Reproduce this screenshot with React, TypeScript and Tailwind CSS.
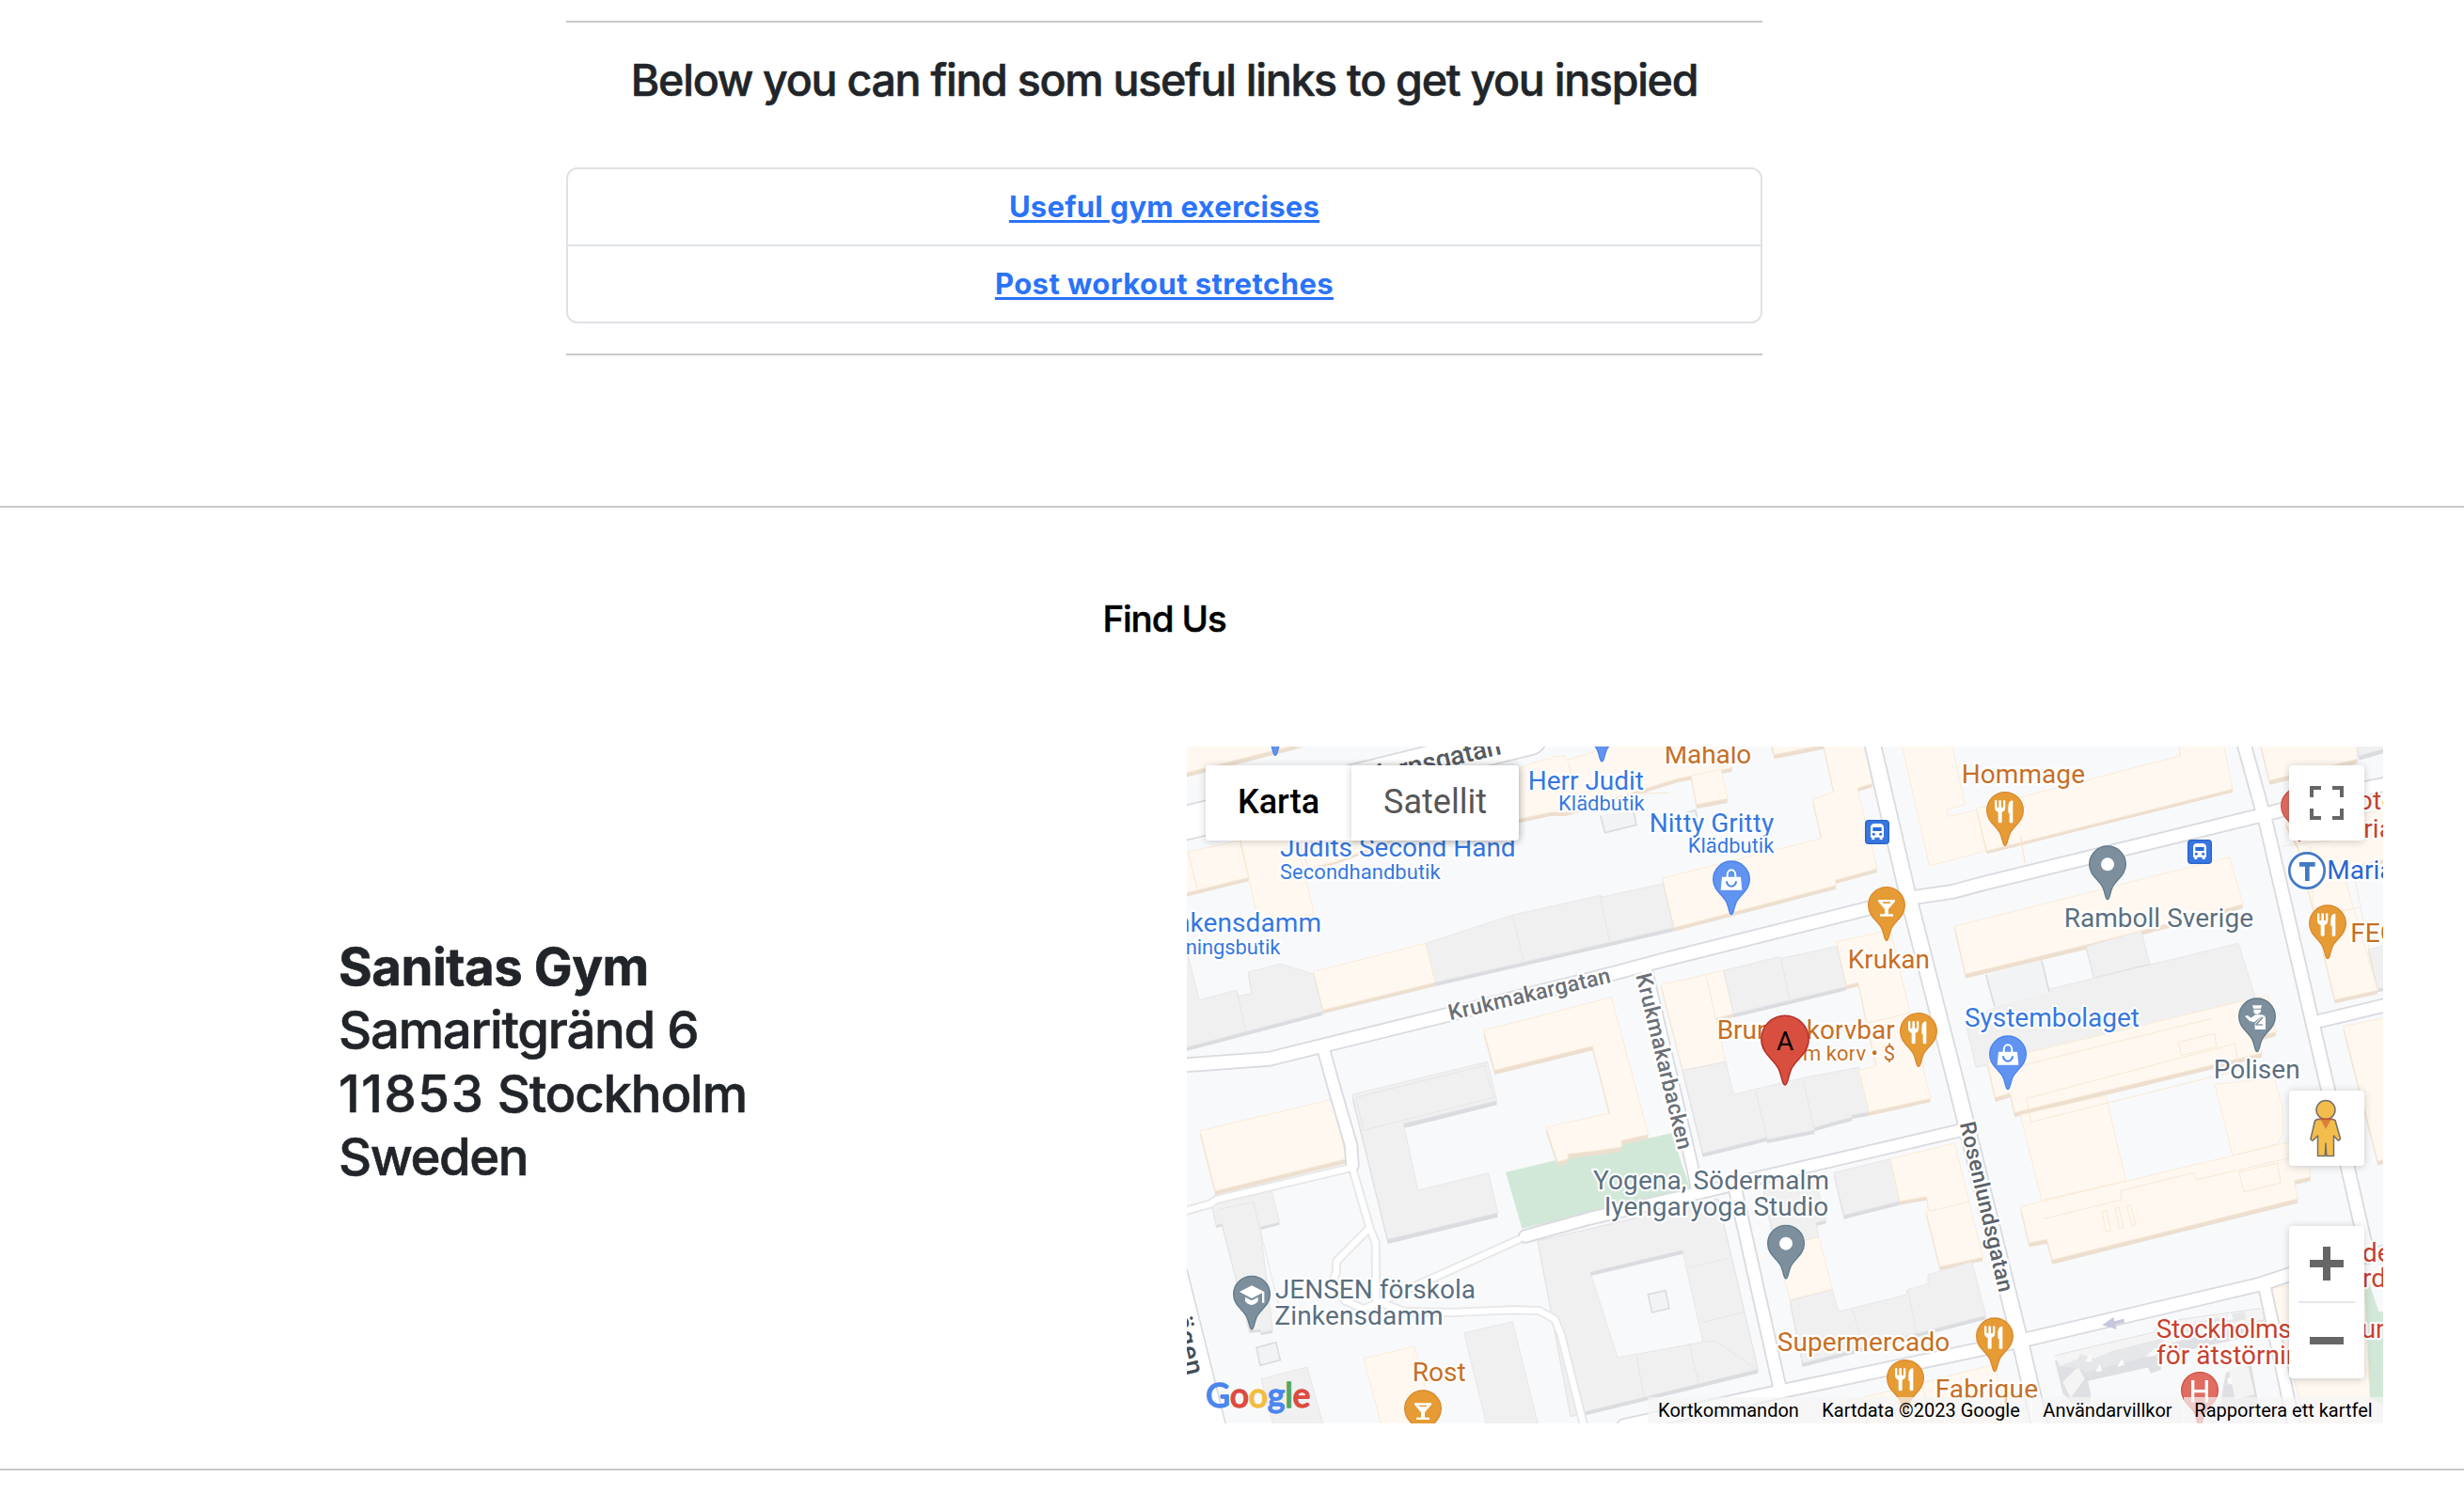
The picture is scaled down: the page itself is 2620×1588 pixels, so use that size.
import type { ReactNode } from "react";

/* Map geometry is kept in a 3816 x 2160 unit space whose origin is (6, 12). */

type Tone = "shop" | "plain";
type Building = { p: string; t: Tone; d?: number };

const BUILDINGS: Building[] = [
  { t: "shop", d: 14, p: "0,0 380,0 0,97" },
  { t: "shop", d: 0, p: "175,300 350,290 412,548 232,560" },
  { t: "shop", d: 12, p: "0,350 175,312 203,430 0,480" },
  { t: "shop", d: 8, p: "360,300 690,300 480,380 395,400" },
  { t: "shop", d: 12, p: "1060,85 1110,64 1170,50 1172,44 1212,42 1216,56 1400,0 1740,0 1745,80 1570,115 1440,155 1215,222 1165,222 1060,245" },
  { t: "shop", d: 14, p: "1615,105 1710,85 1731,178 1632,197" },
  { t: "shop", d: 14, p: "1870,0 2070,0 1880,38" },
  { t: "shop", d: 12, p: "2035,0 2168,0 2193,130 2145,145 2208,402 2075,438 2077,455 1560,590 1523,432 2030,305 2003,180 2070,157" },
  { t: "plain", d: 12, p: "768,640 1045,550 1325,487 1330,492 1525,450 1558,590 1290,652 798,765" },
  { t: "shop", d: 12, p: "410,730 768,640 798,765 440,853" },
  { t: "plain", d: 12, p: "0,670 10,680 45,820 165,790 170,808 213,800 202,732 305,706 410,738 440,857 195,922 0,973" },
  { t: "shop", d: 14, p: "953,918 1360,812 1478,1250 1392,1270 1392,1290 1312,1302 1222,1312 1222,1328 1188,1337 1152,1227 1355,1182 1300,968 988,1045" },
  { t: "plain", d: 14, p: "533,1122 965,1018 995,1142 697,1216 743,1428 968,1373 998,1500 647,1585" },
  { t: "shop", d: 14, p: "48,1238 470,1138 515,1328 97,1430" },
  { t: "plain", d: 8, p: "85,1472 275,1425 302,1530 240,1546 280,1875 244,1882 240,1872 205,1875 118,1535 100,1540" },
  { t: "plain", p: "243,2030 390,1992 445,2190 285,2190" },
  { t: "shop", p: "570,1965 732,1926 800,2190 630,2190" },
  { t: "plain", p: "890,1883 1045,1847 1130,2190 965,2190" },
  { t: "shop", d: 10, p: "1518,772 1718,727 1750,865 1693,880 1725,1018 1588,1045" },
  { t: "plain", d: 12, p: "1718,727 1895,683 1902,688 2078,650 2110,778 1930,822 1750,865" },
  { t: "plain", d: 12, p: "1588,1045 1725,1018 1750,1122 1970,1070 2150,1035 2182,1178 2128,1188 2128,1195 2070,1210 2008,1228 2008,1236 1858,1266 1855,1260 1652,1310" },
  { t: "shop", d: 12, p: "2078,635 2250,598 2378,1135 2182,1178 2150,1045 2205,1030 2175,895 2148,765 2110,775" },
  { t: "plain", d: 12, p: "2070,1372 2250,1328 2280,1463 2102,1508" },
  { t: "shop", d: 12, p: "2250,1328 2455,1278 2545,1642 2408,1672 2365,1500 2372,1492 2366,1448 2280,1463" },
  { t: "plain", d: 10, p: "1845,1430 2010,1390 2045,1524 2013,1532 2022,1578 1885,1610" },
  { t: "shop", p: "1885,1610 2022,1578 2065,1743 1930,1778" },
  { t: "plain", d: 12, p: "1930,1780 2065,1746 2085,1815 2300,1762 2305,1745 2370,1727 2370,1697 2510,1656 2555,1828 1970,1980" },
  { t: "shop", p: "2100,2105 2580,1985 2640,2190 2100,2190" },
  { t: "shop", p: "2285,0 2445,0 2488,198 2430,213 2435,235 2525,215 2555,345 2375,393" },
  { t: "shop", d: 10, p: "2525,210 3175,42 3170,0 3312,0 3342,148 2558,345" },
  { t: "shop", d: 14, p: "3430,0 3738,0 3740,52 3460,120" },
  { t: "plain", d: 14, p: "3735,0 3840,0 3840,15 3745,42" },
  { t: "shop", d: 12, p: "3510,255 3840,215 3840,370 3690,400 3805,790 3668,820 3550,330" },
  { t: "plain", d: 10, p: "3775,660 3840,645 3840,778 3805,786" },
  { t: "shop", d: 14, p: "3695,905 3840,875 3840,1325 3805,1335" },
  { t: "plain", d: 10, p: "2875,650 3050,600 3077,705 2900,750" },
  { t: "plain", d: 0, p: "3360,640 3420,830 2700,1010 2523,1035 2488,885 2700,800" },
  { t: "shop", d: 14, p: "2455,585 3332,365 3375,515 3050,600 2875,645 2490,738" },
  { t: "shop", d: 14, p: "2560,1020 3455,805 3480,922 3425,938 3435,990 2647,1180 2632,1118 2585,1132" },
  { t: "shop", p: "2665,1187 2937,1125 3002,1398 2733,1460" },
  { t: "shop", p: "3285,1090 3475,1070 3500,1160 3503,1245 3485,1280 3342,1317" },
  { t: "shop", d: 14, p: "2665,1480 3520,1275 3580,1260 3590,1385 3538,1397 3550,1455 2767,1650 2750,1585 2693,1595" },
  { t: "shop", p: "3465,1742 3760,1690 3785,2190 3580,2190" },
];

/* Inner seams between adjoining blocks. */
const PLAIN_SEAMS =
  "M1045,550L1080,695M1325,490L1355,637M168,800L197,935M1902,690L1930,828" +
  "M545,1132L955,1030L985,1132L570,1237ZM105,1490L218,1465L300,1800" +
  "M1820,1110L1860,1275M1973,1080L2008,1235M2130,1808L2152,1890M2305,1745L2335,1885";
const SHOP_SEAMS =
  "M1662,740L1693,880M2375,1495L2500,1465M2665,295L2680,385L2665,295M2175,895L2310,862M1545,160L1455,162L1440,155" +
  "M2683,1135L3350,960L3362,1045L2700,1210ZM3170,955L3285,928L3290,970L3178,998ZM2590,1050L3275,880" +
  "M2737,1520L2988,1458L2985,1430L3218,1372L3225,1395L3525,1325M3362,1370L3485,1342L3495,1405L3378,1433Z" +
  "M2925,1495L2940,1492L2953,1558L2938,1560ZM2967,1486L2980,1483L2993,1548L2980,1550ZM3005,1478L3017,1476L3033,1538L3020,1541Z" +
  "M2355,2060L2385,2190M3500,330L3840,290M3590,560L3745,525M3600,560L3590,330M3725,400L3790,720M1223,60L1240,140M10,350L40,468M175,315L203,430";

const ROADS: { p: string; w: number }[] = [
  { w: 50, p: "-20,1030 267,1009 835,869 1370,735 1538,690 2175,530 2335,492 2450,475 2550,448 3430,232 3790,140 3900,118" },
  { w: 58, p: "2190,-10 2302,470 2458,1080 2515,1310 2657,1883 2671,1940 2730,2190" },
  { w: 50, p: "3374,-10 3435,210 3447,250 3640,1080 3708,1350 3765,1600 3775,1640" },
  { w: 48, p: "3622,887 3860,830" },
  { w: 50, p: "1400,2180 1900,2070 2685,1904 3430,1728 3560,1685 3900,1610" },
  { w: 46, p: "3445,1740 3540,2190" },
  { w: 46, p: "1085,1575 1290,1518 1730,1415 1800,1395 2490,1233" },
  { w: 44, p: "1468,710 1555,1080 1620,1360 1633,1425" },
  { w: 48, p: "1752,1410 1900,2070" },
  { w: 46, p: "444,985 470,1080 530,1285 534,1350" },
  { w: 114, p: "-60,270 6,255 750,71 1100,-15" },
];

const PATHS = [
  "-10,1497 80,1472 100,1458 525,1357",
  "535,1360 590,1550 608,1595 610,1790",
  "585,1552 483,1655 483,1690 470,1720 510,1780 570,1807 620,1785 1065,1585",
  "620,1785 700,1815 850,1818 1040,1810 1130,1812 1180,1840 1200,1890 1275,2190",
];

const BLUE = "#3577e0";
const ORANGE = "#c66f25";
const SLATE = "#5b6f7f";
const RED = "#c8422f";

type Label = { s: string; x: number; y: number; c: string; l?: number; f?: number };
const LABELS: Label[] = [
  { s: "Mahalo", x: 1529, y: 65, c: ORANGE, l: 278 },
  { s: "Herr Judit", x: 1094, y: 149, c: BLUE, l: 370 },
  { s: "Klädbutik", x: 1191, y: 217, c: BLUE, l: 275, f: 66 },
  { s: "Judits Second Hand", x: 303, y: 364, c: BLUE, l: 752 },
  { s: "Secondhandbutik", x: 303, y: 434, c: BLUE, l: 512, f: 66 },
  { s: "Zinkensdamm", x: -101, y: 604, c: BLUE, l: 536 },
  { s: "ningsbutik", x: 2, y: 674, c: BLUE, l: 302, f: 66 },
  { s: "Nitty Gritty", x: 1481, y: 284, c: BLUE, l: 398 },
  { s: "Klädbutik", x: 1604, y: 352, c: BLUE, l: 275, f: 66 },
  { s: "Krukan", x: 2114, y: 721, c: ORANGE, l: 262 },
  { s: "Brunos korvbar", x: 1697, y: 946, c: ORANGE, l: 567 },
  { s: "m korv • $", x: 1971, y: 1015, c: ORANGE, l: 294, f: 66 },
  { s: "Hommage", x: 2477, y: 130, c: ORANGE, l: 394 },
  { s: "Ramboll Sverige", x: 2804, y: 589, c: SLATE, l: 604 },
  { s: "Mariatorget", x: 3643, y: 435, c: "#2a66cf" },
  { s: "FEG", x: 3718, y: 635, c: ORANGE },
  { s: "otel", x: 3740, y: 213, c: RED, l: 144 },
  { s: "ria", x: 3760, y: 302, c: RED },
  { s: "Systembolaget", x: 2487, y: 907, c: BLUE, l: 558 },
  { s: "Polisen", x: 3281, y: 1072, c: SLATE, l: 276 },
  { s: "Yogena, Södermalm", x: 1302, y: 1426, c: SLATE, l: 753 },
  { s: "Iyengaryoga Studio", x: 1337, y: 1510, c: SLATE, l: 716 },
  { s: "JENSEN förskola", x: 287, y: 1773, c: SLATE, l: 640 },
  { s: "Zinkensdamm", x: 286, y: 1858, c: SLATE, l: 538 },
  { s: "Rost", x: 725, y: 2038, c: ORANGE, l: 171 },
  { s: "Supermercado", x: 1889, y: 1942, c: ORANGE, l: 551 },
  { s: "Fabrique", x: 2393, y: 2092, c: ORANGE, l: 328 },
  { s: "Stockholms", x: 3098, y: 1898, c: RED, l: 432 },
  { s: "un", x: 3752, y: 1898, c: RED },
  { s: "för ätstörnin", x: 3099, y: 1982, c: RED, l: 460 },
  { s: "der", x: 3756, y: 1655, c: RED },
  { s: "rd", x: 3756, y: 1738, c: RED },
];

const STREETS = [
  { s: "Krukmakargatan", x: 846, y: 886, a: -13.3, l: 529, f: 70, c: "#6b7078", w: 14 },
  { s: "Hornsgatan", x: 586, y: 136, a: -13.2, l: 438, f: 84, c: "#565b62", w: 0 },
  { s: "Krukmakarbacken", x: 1438, y: 742, a: 76.4, l: 576, f: 70, c: "#6b7078", w: 14 },
  { s: "Rosenlundsgatan", x: 2471, y: 1215, a: 76.9, l: 556, f: 70, c: "#5c6269", w: 14 },
  { s: "Ringvägen", x: -87, y: 1620, a: 77, l: 412, f: 84, c: "#454d56", w: 0 },
];

type Glyph = "fork" | "bag" | "bar" | "dot" | "cap" | "police" | "hospital" | "none";
type Pin = { x: number; y: number; fill: string; edge: string; g: Glyph };
const FOOD = { fill: "#e69b35", edge: "#d98a2e" };
const STORE = { fill: "#6193f0", edge: "#4a84ea" };
const PLACE = { fill: "#7d8f9d", edge: "#617b8a" };
const CARE = { fill: "#e06c62", edge: "#d24f43" };
const PINS: Pin[] = [
  { x: 288, y: -72, g: "none", ...STORE },
  { x: 1330, y: -52, g: "none", ...STORE },
  { x: 1743, y: 436, g: "bag", ...STORE },
  { x: 2238, y: 519, g: "bar", ...FOOD },
  { x: 2340, y: 921, g: "fork", ...FOOD },
  { x: 2616, y: 216, g: "fork", ...FOOD },
  { x: 2943, y: 388, g: "dot", ...PLACE },
  { x: 3645, y: 577, g: "fork", ...FOOD },
  { x: 2625, y: 994, g: "bag", ...STORE },
  { x: 3420, y: 874, g: "police", ...PLACE },
  { x: 1917, y: 1598, g: "dot", ...PLACE },
  { x: 213, y: 1760, g: "cap", ...PLACE },
  { x: 759, y: 2125, g: "bar", ...FOOD },
  { x: 2298, y: 2028, g: "fork", ...FOOD },
  { x: 2583, y: 1894, g: "fork", ...FOOD },
  { x: 3237, y: 2067, g: "hospital", ...CARE },
  { x: 3555, y: 202, g: "hospital", ...CARE },
];

const TEARDROP = "M0,112C-7,112 -6,96 -15,74C-27,48 -58,36 -58,0A58,58 0 1 1 58,0C58,36 27,48 15,74C6,96 7,112 0,112Z";

function PinGlyph({ g }: { g: Glyph }) {
  switch (g) {
    case "fork":
      return (
        <path
          fill="#fff"
          d="M-33,-30V-10Q-33,2 -22,5V36Q-22,40 -18,40H-14Q-10,40 -10,36V5Q1,2 1,-10V-30Q1,-33 -3,-33Q-6,-33 -6,-30V-10H-12V-30Q-12,-33 -16,-33Q-20,-33 -20,-30V-10H-26V-30Q-26,-33 -29,-33Q-33,-33 -33,-30ZM10,8V-10Q10,-32 25,-32V37Q25,40 22,40H17Q14,40 14,37V8Z"
        />
      );
    case "bag":
      return (
        <g fill="none" stroke="#fff">
          <path fill="#fff" stroke="none" d="M-30,-8H30L34,34H-34Z" />
          <path strokeWidth="6" d="M-13,-6V-14A13,16 0 0 1 13,-14V-6" />
          <path stroke="#4a84ea" strokeWidth="6" d="M-15,6A15,16 0 0 0 15,6" />
        </g>
      );
    case "bar":
      return <path fill="#fff" fillRule="evenodd" d="M-27,-18H27V-13L6,12V28H21V35H-21V28H-6V12L-27,-13ZM-14,-11L-10,-6H10L14,-11Z" />;
    case "dot":
      return <circle r="21" fill="#fff" />;
    case "cap":
      return <path fill="#fff" d="M0,-28L40,-8V27H33V-4L0,13L-39,-8ZM-21,9L0,20L20,9V22Q12,33 0,34Q-14,33 -21,22Z" />;
    case "police":
      return (
        <g fill="#fff">
          <path d="M-15,-36H15L12,-26H-12ZM-11,-23H12V-16Q8,-8 0,-8Q-9,-8 -11,-16ZM-5,-6H14Q27,-4 27,6V41H-7V22L17,-4L-9,18L-24,14L-39,-2L-30,-4L-20,4Z" />
          <path d="M-4,26L18,2" stroke="#7d8f9d" strokeWidth="5" />
          <path d="M-4,26H18" stroke="#7d8f9d" strokeWidth="4" />
        </g>
      );
    case "hospital":
      return <path fill="none" stroke="#fff" strokeWidth="10" d="M-22,-33V38M22,-33V38M-22,2H22" />;
    default:
      return null;
  }
}

function BusStop({ x, y }: { x: number; y: number }) {
  return (
    <g transform={`translate(${x} ${y})`}>
      <rect x="-37" y="-37" width="74" height="74" rx="10" fill="#3876e2" stroke="#2b62c6" strokeWidth="4" />
      <path fill="#fff" d="M-21,-16Q-20,-26 -8,-27H8Q20,-26 21,-16V17H17V24H8V17H-8V24H-17V17H-21Z" />
      <path fill="#2f6bd6" d="M-14,-15H14V-3H-14Z" />
      <circle cx="-11" cy="7" r="4.5" fill="#2f6bd6" />
      <circle cx="11" cy="7" r="4.5" fill="#2f6bd6" />
    </g>
  );
}

function Hospital() {
  return (
    <g>
      <g fill="#dfe0e3">
        <path d="M2775,1972L2800,2075L2830,2110H2885L2890,2080L2880,2035L3080,1990L3100,1960L3420,1890L3445,1850L3430,1805Z" />
        <path d="M3320,2010L3400,1985L3425,2120L3300,2130Z" />
        <path d="M3065,1975L3105,1960L3115,2000L3080,2012Z" />
      </g>
      <g fill="#f4f4f4">
        <path d="M2775,1955L3095,1880L3105,1850L3430,1805L3440,1840L3110,1925L2870,1985L2790,1990Z" />
        <path d="M2800,2040L2850,1990L2870,2030L2825,2090Z" />
        <path d="M3330,2000L3390,1985L3412,2080L3350,2095Z" />
      </g>
      <g fill="#e6e7e9">
        <path d="M2790,1990L2850,1965L2855,1950L2900,1965L2960,1940L3060,1915L3120,1900V1925L2880,2000Z" />
        <path d="M3150,1870L3250,1845L3380,1815L3385,1840L3160,1890Z" />
        <path d="M2860,1990L3080,1930L3085,1955L2870,2010Z" />
      </g>
      <g fill="#fafafa">
        <path d="M2870,1975L2890,1950L2893,1975ZM2905,2008L2918,1982L2926,2005ZM2972,1992L2990,1965L2997,1985ZM3065,1960L3095,1930L3098,1955ZM3320,1843L3335,1818L3345,1840ZM3325,2030L3340,2020V2045L3327,2048Z" />
      </g>
      <path fill="none" stroke="#d6d7da" strokeWidth="2" d="M2775,1955L3095,1880L3105,1850L3430,1805M2880,2035L3080,1990M3400,1985L3425,2120" />
    </g>
  );
}

function MapArt() {
  return (
    <svg className="block h-full w-full" viewBox="6 12 3816 2160" role="img" aria-label="Karta">
      <rect x="0" y="0" width="3840" height="2190" fill="#f8f9fb" />
      <path fill="#d1e8d8" d="M1023,1370L1552,1245L1612,1425L1290,1500L1075,1550ZM3750,1670L3780,1730L3808,1815H3840V2120L3775,2090Z" />

      {BUILDINGS.filter((b) => b.d).map((b) => (
        <g key={b.p} fill={b.t === "shop" ? "#ecdfd0" : "#dadce0"}>
          <polygon points={b.p} transform={`translate(0 ${b.d})`} />
          <polygon points={b.p} transform={`translate(0 ${(b.d ?? 0) / 2})`} />
        </g>
      ))}
      {BUILDINGS.map((b) => (
        <polygon
          key={b.p}
          points={b.p}
          fill={b.t === "shop" ? "#fef8f1" : "#f0f0f0"}
          stroke={b.t === "shop" ? "#fbe8d2" : "#e4e5e7"}
          strokeWidth="2.5"
        />
      ))}

      <path fill="#f0f0f0" stroke="#e0e1e3" strokeWidth="3" d="M1125,1590L1700,1455L1828,2000L1290,2135L1230,2150Z" />
      <path fill="none" stroke="#dadce0" strokeWidth="12" d="M1828,2006L1290,2137L1270,2142" />
      <path fill="#f8f9fb" stroke="#e0e1e3" strokeWidth="2" d="M1295,1695L1588,1625L1652,1912L1380,1962Z" />
      <path fill="none" stroke="#dadce0" strokeWidth="12" d="M1294,1695L1588,1625" />
      <path fill="none" stroke="#e2e3e5" strokeWidth="2.5" d="M1605,1675L1735,1645M1648,1850L1780,1818M1440,1952L1465,2090M1608,1915L1640,2050M1652,1912L1690,1908L1828,2002" />
      <path fill="none" stroke="#e2e3e5" strokeWidth="2.5" d={PLAIN_SEAMS} />
      <path fill="none" stroke="#f8e4cd" strokeWidth="2.5" d={SHOP_SEAMS} />
      <g fill="#f1f3f4" stroke="#dadce0" strokeWidth="5">
        <path d="M1477,1760L1533,1748L1545,1805L1490,1818Z" />
        <path d="M228,1930L290,1913L304,1970L240,1987Z" />
        <path d="M1325,232L1340,287L1440,262L1430,215" />
        <path d="M1595,225L1628,215L1634,240" />
        <path stroke="none" d="M2555,740L2733,695L2757,795L2585,842Z" />
        <path fill="none" d="M2555,740L2583,842M2733,695L2757,795" />
      </g>
      <Hospital />

      <g fill="none" strokeLinejoin="round" strokeLinecap="round">
        {PATHS.map((p) => (
          <polyline key={p} points={p} stroke="#e6e7e8" strokeWidth="30" />
        ))}
        {ROADS.map((r) => (
          <polyline key={r.p} points={r.p} stroke="#dadbe0" strokeWidth={r.w} />
        ))}
        {PATHS.map((p) => (
          <polyline key={p} points={p} stroke="#fff" strokeWidth="19" />
        ))}
        {ROADS.map((r) => (
          <polyline key={r.p} points={r.p} stroke="#fff" strokeWidth={r.w - 11} />
        ))}
        <path fill="#fff" stroke="#dadbe0" strokeWidth="5" d="M6,1680L134,2190H-20V1640Z" />
      </g>
      <path fill="#c5c8db" d="M2926,1858L2962,1833L2965,1846L2995,1838L2997,1850L2968,1857L2972,1872Z" />

      <g fontFamily="Roboto, 'Liberation Sans', sans-serif" strokeLinejoin="round">
        {STREETS.map((t) => (
          <text
            key={t.s}
            transform={`translate(${t.x} ${t.y}) rotate(${t.a})`}
            fontSize={t.f}
            fontWeight="500"
            fill={t.c}
            stroke="#fff"
            strokeWidth={t.w}
            paintOrder="stroke"
            textLength={t.l}
          >
            {t.s}
          </text>
        ))}
        <BusStop x={2208} y={285} />
        <BusStop x={3237} y={348} />
        <circle cx="3579" cy="408" r="56" fill="#fff" stroke="#4179c4" strokeWidth="8" />
        <path fill="none" stroke="#4179c4" strokeWidth="14" d="M3555,388H3605M3580,388V441" />
        {PINS.map((p) => (
          <g key={`${p.x}-${p.y}`} transform={`translate(${p.x} ${p.y})`}>
            <path d={TEARDROP} fill={p.fill} stroke={p.edge} strokeWidth="4" />
            <PinGlyph g={p.g} />
          </g>
        ))}
        {LABELS.map((t) => (
          <text
            key={`${t.s}-${t.y}`}
            x={t.x}
            y={t.y}
            fontSize={t.f ?? 84}
            fill={t.c}
            stroke="#fff"
            strokeWidth="13"
            paintOrder="stroke"
            textLength={t.l}
          >
            {t.s}
          </text>
        ))}
        <g transform="translate(1914 946)">
          <path d={TEARDROP} transform="scale(1.3)" fill="#d84f3f" stroke="#b3312a" strokeWidth="3.5" />
          <text y="34" textAnchor="middle" fontSize="84" fill="#000">
            A
          </text>
        </g>
      </g>
      <text
        x="66"
        y="2121"
        fontFamily="Lato, 'Open Sans', sans-serif"
        fontSize="107"
        fontWeight="500"
        textLength="334"
        strokeWidth="4"
        strokeLinejoin="round"
      >
        <tspan fill="#4a86ee" stroke="#4a86ee">G</tspan>
        <tspan fill="#dd4b3e" stroke="#dd4b3e">o</tspan>
        <tspan fill="#f2bc3f" stroke="#f2bc3f">o</tspan>
        <tspan fill="#4a86ee" stroke="#4a86ee">g</tspan>
        <tspan fill="#55a65a" stroke="#55a65a">l</tspan>
        <tspan fill="#dd4b3e" stroke="#dd4b3e">e</tspan>
      </text>
    </svg>
  );
}

const CARD = "flex h-20 w-20 items-center justify-center rounded-[4px] bg-white shadow-[0_1px_8px_rgba(0,0,0,0.2)]";

function MapControls() {
  return (
    <>
      <div className="absolute left-5 top-5 flex h-20 rounded-[4px] text-[36px] shadow-[0_1px_8px_rgba(0,0,0,0.2)]">
        <button className="w-[155px] rounded-l-[4px] bg-white pb-0.5 font-medium text-black">Karta</button>
        <button className="w-[178px] rounded-r-[4px] bg-white pb-0.5 text-[#565656] shadow-[0_1px_8px_rgba(0,0,0,0.2)]">Satellit</button>
      </div>
      <div className="absolute right-5 top-5">
        <button className={CARD} aria-label="Helskärm">
          <svg className="h-9 w-9" viewBox="0 0 18 18" fill="#666">
            <path d="M0 0v6h2V2h4V0H0zM16 0h-4v2h4v4h2V0h-2zM16 16h-4v2h6v-6h-2v4zM2 12H0v6h6v-2H2v-4z" />
          </svg>
        </button>
      </div>
      <div className="absolute right-5 top-[366px] flex flex-col gap-16">
        <button className={CARD} aria-label="Street View">
          <svg className="-ml-0.5 h-[62px] w-9" viewBox="0 0 36 62">
            <g fill="#f4bd4b" stroke="#73706a" strokeWidth="1.5" strokeLinejoin="round">
              <path d="M9 21.500H25L28 22.500L33.500 42Q33 44 31 44L26.500 39V60.500H18.800L18 47L17.200 60.500H9.500V39L4.500 44Q2 44 2 42L6.500 23Z" />
              <circle cx="18" cy="11.500" r="10" />
            </g>
            <path d="M12 21H24L18 32Z" fill="#d8803c" />
            <path d="M10.500 21.300H25.500" stroke="#c9532f" strokeWidth="1.500" />
          </svg>
        </button>
        <div className="flex h-[162px] w-20 flex-col items-center rounded-[4px] bg-white shadow-[0_1px_8px_rgba(0,0,0,0.2)]">
          <button className="flex h-20 w-20 items-center justify-center" aria-label="Zooma in">
            <svg className="h-9 w-9" viewBox="0 0 18 18" fill="#666">
              <path d="M18 7h-7V0H7v7H0v4h7v7h4v-7h7z" />
            </svg>
          </button>
          <div className="h-0.5 w-[60px] bg-[#e6e6e6]" />
          <button className="flex h-20 w-20 items-center justify-center" aria-label="Zooma ut">
            <svg className="h-9 w-9" viewBox="0 0 18 18" fill="#666">
              <path d="M0 7h18v4H0z" />
            </svg>
          </button>
        </div>
      </div>
      <div className="absolute bottom-0 right-0 flex h-7 gap-px whitespace-nowrap text-[20px] leading-[29px] text-black">
        <Credit width="w-[172px]">Kortkommandon</Credit>
        <Credit width="w-[235px]">Kartdata ©2023 Google</Credit>
        <Credit width="w-[160px]">Användarvillkor</Credit>
        <Credit width="w-[212px]">Rapportera ett kartfel</Credit>
      </div>
    </>
  );
}

function Credit({ width, children }: { width: string; children: ReactNode }) {
  return <span className={`${width} bg-[#f5f5f5]/70 text-center`}>{children}</span>;
}

function UsefulLinks() {
  return (
    <section className="ml-[602px] w-[1272px] pt-[22px] text-center">
      <hr className="border-t-2 border-[#c8c9ca]" />
      <h2 className="mt-[32px] text-[46.5px] font-medium leading-[58px] tracking-[-1.26px] text-[#212529] [-webkit-text-stroke:0.6px_#212529]">
        Below you can find som useful links to get you inspied
      </h2>
      <ul className="mt-[64px] divide-y-2 divide-[#dee2e6] rounded-xl border-2 border-[#dee2e6] text-[31px] font-bold leading-[48px] text-[#2a73f8]">
        <li className="py-4">
          <a href="#exercises" className="tracking-[0.25px] underline decoration-[3px] underline-offset-[3px]">
            Useful gym exercises
          </a>
        </li>
        <li className="py-4">
          <a href="#stretches" className="tracking-[0.43px] underline decoration-[3px] underline-offset-[3px]">
            Post workout stretches
          </a>
        </li>
      </ul>
      <hr className="mt-8 border-t-2 border-[#c8c9ca]" />
    </section>
  );
}

export default function App() {
  return (
    <main className="h-[1588px] w-[2620px] overflow-hidden bg-white font-['Inter','Liberation_Sans',sans-serif]">
      <UsefulLinks />
      <hr className="mt-40 border-t-2 border-[#c8c9ca]" />
      <section>
        <h3 className="ml-[602px] mt-[94px] w-[1272px] text-center text-[38.5px] font-medium leading-[48px] tracking-[-1.1px] text-black [-webkit-text-stroke:0.5px_#000]">
          Find Us
        </h3>
        <div className="mt-[112px] flex">
          <address className="ml-[360px] w-[902px] pt-[201px] text-[54.5px] font-medium not-italic leading-[67.3px] text-[#212529] [-webkit-text-stroke:0.6px_#212529]">
            <strong className="block font-bold tracking-[-0.45px]">Sanitas Gym</strong>
            <span className="block tracking-[-1.25px]">Samaritgränd 6</span>
            <span className="block">
              <span className="tracking-[1.6px]">11853</span>
              <span className="tracking-[-1.2px]"> Stockholm</span>
            </span>
            <span className="block tracking-[-1.5px]">Sweden</span>
          </address>
          <div className="relative h-[720px] w-[1272px] overflow-hidden font-['Roboto','Liberation_Sans',sans-serif]">
            <MapArt />
            <MapControls />
          </div>
        </div>
      </section>
      <hr className="mt-12 border-t-2 border-[#c8c9ca]" />
    </main>
  );
}
